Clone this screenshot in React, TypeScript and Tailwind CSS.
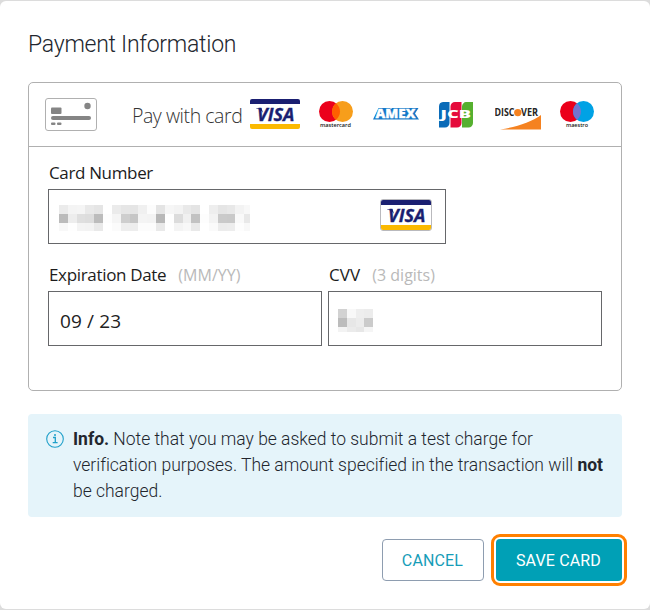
import React from "react";

const cardCols = [0, 9, 18, 26, 35, 44, 53, 62, 71, 79, 88, 97, 106, 115, 124, 132, 141, 150, 159, 168, 176, 185, 191];
const cardRows = [
  ["#ebebeb", "#f4f4f4", "#f5f5f5", "#e9e9e9", "#e5e5e5", "#fff", "#ebebeb", "#e6e6e6", "#e5e5e5", "#f0f0f0", "#fcfcfc", "#e4e4e4", "#f6f6f6", "#f3f3f3", "#e9e9e9", "#e4e4e4", "#fff", "#eeeeee", "#e5e5e5", "#e8e8e8", "#f3f3f3", "#f8f8f8"],
  ["#bbbbbb", "#ededed", "#dfdfdf", "#dddddd", "#bcbcbc", "#fdfdfd", "#f5f5f5", "#cecece", "#c6c6c6", "#f4f4f4", "#f3f3f3", "#b8b8b8", "#fefefe", "#dcdcdc", "#f0f0f0", "#c2c2c2", "#fdfdfd", "#f3f3f3", "#cacaca", "#c9c9c9", "#f9f9f9", "#e8e8e8"],
  ["#f8f8f8", "#fefefe", "#f4f4f4", "#f3f3f3", "#e9e9e9", "#fff", "#fbfbfb", "#eeeeee", "#ededed", "#fcfcfc", "#fcfcfc", "#e9e9e9", "#fff", "#f4f4f4", "#f8f8f8", "#e9e9e9", "#fff", "#fafafa", "#ececec", "#ededed", "#fdfdfd", "#f8f8f8"],
];
const cvvCols = [0, 9, 18, 26, 35];
const cvvRows = [
  ["#d2d2d2", "#f8f8f8", "#eeeeee", "#ececec"],
  ["#bcbcbc", "#e7e7e7", "#ececec", "#cbcbcb"],
  ["#f3f3f3", "#ebebeb", "#e7e7e7", "#f5f5f5"],
];

function Mosaic({ cols, rows, ys }: { cols: number[]; rows: string[][]; ys: number[] }) {
  const w = cols[cols.length - 1];
  const h = ys[ys.length - 1];
  return (
    <svg width={w} height={h} shapeRendering="crispEdges" className="block">
      {rows.map((row, r) =>
        row.map((c, i) => (
          <rect key={r + "-" + i} x={cols[i]} y={ys[r]} width={cols[i + 1] - cols[i]} height={ys[r + 1] - ys[r]} fill={c} />
        )),
      )}
    </svg>
  );
}

function Visa({ framed = false }: { framed?: boolean }) {
  return (
    <svg width="52" height="32" viewBox="0 0 52 32" className="block shrink-0">
      <rect x={framed ? 0.5 : 1} y={framed ? 0.5 : 1} width={framed ? 51 : 50} height={framed ? 31 : 30} rx="2.5" fill="#fff" stroke={framed ? "#b9b9bd" : "none"} />
      <path d="M1 6V3a2 2 0 0 1 2-2h46a2 2 0 0 1 2 2v3z" fill="#1a1f71" />
      <path d="M1 26v3a2 2 0 0 0 2 2h46a2 2 0 0 0 2-2v-3z" fill="#fbb900" />
      <text x="8" y="22.600" fontFamily="Open Sans, sans-serif" fontSize="17.500" fontWeight="700" fontStyle="italic" fill="#1a1f71" stroke="#1a1f71" strokeWidth=".3" textLength="37.500" lengthAdjust="spacingAndGlyphs">VISA</text>
      <path d="M7 10.200h5.500l1.500 4.500C12 12.200 10 10.900 7 10.500z" fill="#1a1f71" />
    </svg>
  );
}

function Circles({ left, right, mid, label, labelX, labelW }: { left: string; right: string; mid: string; label: string; labelX: number; labelW: number }) {
  return (
    <svg width="34" height="28" viewBox="0 0 34 28" className="block shrink-0">
      <circle cx="10.500" cy="10.500" r="10.500" fill={left} />
      <circle cx="23.500" cy="10.500" r="10.500" fill={right} />
      <path d="M17 2.250a10.500 10.500 0 0 1 0 16.500a10.500 10.500 0 0 1 0-16.500" fill={mid} />
      <text x={labelX} y="26" fontFamily="Open Sans, sans-serif" fontSize="6" fontWeight="600" fill="#151515" textLength={labelW} lengthAdjust="spacingAndGlyphs">{label}</text>
    </svg>
  );
}

function Amex() {
  return (
    <svg width="47" height="22" viewBox="0 -4 47 22" className="block shrink-0">
      <path d="M5.500 1H17l1 1 1-1h26.500L42 6.500l4 6H0z" fill="#1578c8" />
      <text x="2.500" y="11" fontFamily="Open Sans, sans-serif" fontSize="11.500" fontWeight="800" fill="#fff" stroke="#fff" strokeWidth=".3" textLength="40" lengthAdjust="spacingAndGlyphs">AMEX</text>
    </svg>
  );
}

function Jcb() {
  return (
    <svg width="34" height="26" viewBox="0 0 34 26" className="block shrink-0">
      <path d="M4 0h6.500v21a4.500 4.500 0 0 1-4.500 4.500H0V4.500A4.500 4.500 0 0 1 4 0z" fill="#0b6bb8" />
      <path d="M16 0h6.500v21a4.500 4.500 0 0 1-4.500 4.500h-6.500V4.500A4.500 4.500 0 0 1 16 0z" fill="#e50b3b" />
      <path d="M28 0h6v21a4.500 4.500 0 0 1-4.500 4.500h-6.500V4.500A4.500 4.500 0 0 1 28 0z" fill="#56b02f" />
      <text x="1.500" y="16.300" fontFamily="Open Sans, sans-serif" fontSize="10" fontWeight="800" fill="#fff" textLength="30.500" lengthAdjust="spacingAndGlyphs">JCB</text>
    </svg>
  );
}

function Discover() {
  return (
    <svg width="47" height="28" viewBox="0 -6 47 28" className="block shrink-0">
      <path d="M46 6v14.500H5C22 18 36 13 46 6z" fill="#f58220" />
      <g fontFamily="Open Sans, sans-serif" fontSize="10" fontWeight="700" fill="#252525">
        <text x="-.5" y="7" textLength="20" lengthAdjust="spacingAndGlyphs">DISC</text>
        <text x="26" y="7" textLength="17" lengthAdjust="spacingAndGlyphs">VER</text>
      </g>
      <circle cx="22.800" cy="3.600" r="3.700" fill="#f58220" />
    </svg>
  );
}

export default function App() {
  return (
    <div className="h-[610px] w-[650px] bg-[#dcdcdc] py-px font-['Roboto',sans-serif]">
      <main className="flex h-[608px] flex-col rounded-[6px] bg-white px-7">
        <h1 className="mt-[29px] h-[52px] text-[23px] leading-[30px] font-light tracking-[-0.25px] text-[#22262e]">Payment Information</h1>

        <section className="h-[309px] rounded-[5px] border border-[#b0b0b0] font-['Open_Sans',sans-serif]">
          <header className="flex h-16 items-start border-b border-[#b0b0b0] pl-4">
            <svg width="52" height="33" viewBox="0 0 52 33" className="mt-[15px] shrink-0" fill="#858585">
              <rect x=".5" y=".5" width="51" height="32" rx="2.500" fill="#fff" stroke="#b0b0b0" />
              <rect x="6" y="9.500" width="10.500" height="6.500" rx="1" />
              <rect x="6" y="18" width="40" height="4" rx="2" />
              <circle cx="42.500" cy="8" r="3.200" />
              <rect x="6" y="24.500" width="4.500" height="2.500" rx="1" />
              <rect x="12" y="24.500" width="4.500" height="2.500" rx="1" />
            </svg>
            <span className="mt-[19px] ml-[35px] w-[115px] text-[19.5px] leading-7 font-light tracking-[-0.45px] whitespace-nowrap text-[#333]">Pay with card</span>
            <div className="mt-[15px] ml-[2px]"><Visa /></div>
            <div className="mt-[18px] ml-[18px]"><Circles left="#eb001b" right="#f79e1b" mid="#ff5f00" label="mastercard" labelX={1} labelW={31} /></div>
            <div className="mt-[20px] ml-5"><Amex /></div>
            <div className="mt-[19px] ml-[19px]"><Jcb /></div>
            <div className="mt-[20px] ml-[22px]"><Discover /></div>
            <div className="mt-[18px] ml-[18px]"><Circles left="#eb001b" right="#00a2e5" mid="#7375cf" label="maestro" labelX={6} labelW={22} /></div>
          </header>

          <div className="pl-[19px]">
            <label className="mt-[14px] block h-7 pl-px text-[17px] leading-6 tracking-[-0.35px] text-[#1c1c1c]">Card Number</label>
            <div className="flex h-[55px] w-[398px] items-start justify-between border border-[#66676a] pl-[10px]">
              <div className="mt-[15px]"><Mosaic cols={cardCols} rows={cardRows} ys={[0, 9, 18, 26]} /></div>
              <div className="mt-[9px] mr-[13px]"><Visa framed /></div>
            </div>
            <div className="mt-[19px] flex gap-[6px]">
              <div className="w-[274px]">
                <label className="flex h-7 items-baseline pl-px text-[17px] leading-6 tracking-[-0.33px] text-[#1c1c1c]">
                  Expiration Date<span className="ml-3 text-[16px] tracking-[0.05px] text-[#b9b9b9]">(MM/YY)</span>
                </label>
                <div className="flex h-[55px] items-center border border-[#66676a] pl-[11px] text-[19px] tracking-[0.15px] text-[#222]"><span className="pt-[5px]">09 / 23</span></div>
              </div>
              <div className="w-[274px]">
                <label className="flex h-7 items-baseline pl-px text-[17px] leading-6 tracking-[0.1px] text-[#1c1c1c]">
                  CVV<span className="ml-3 text-[16px] tracking-[0px] text-[#b9b9b9]">(3 digits)</span>
                </label>
                <div className="h-[55px] border border-[#66676a] pt-[17px] pl-[9px]"><Mosaic cols={cvvCols} rows={cvvRows} ys={[0, 9, 18, 23]} /></div>
              </div>
            </div>
          </div>
        </section>

        <aside className="mt-[23px] flex h-[103px] rounded-[4px] bg-[#e5f4fa] pt-3 pl-[18px]">
          <svg width="18" height="18" viewBox="0 0 18 18" className="mt-1 shrink-0" fill="none" stroke="#1e9fc9">
            <circle cx="9" cy="9" r="8.300" strokeWidth="1.100" />
            <path d="M7 7.500h2.300v5M6.700 12.700h4.900" strokeWidth="1.300" />
            <circle cx="9" cy="4.900" r="1" fill="#1e9fc9" stroke="none" />
          </svg>
          <p className="ml-[9px] text-[17.5px] leading-[26px] font-light tracking-[-0.01px] whitespace-nowrap text-[#22262e]">
            <b className="font-bold">Info.</b> Note that you may be asked to submit a test charge for<br />
            verification purposes. The amount specified in the transaction will <b className="font-bold">not</b><br />
            be charged.
          </p>
        </aside>

        <footer className="mt-[22px] flex justify-end gap-3 text-[16px]">
          <button className="h-[42px] w-[102px] rounded-[4px] border border-[#8e9db0] pt-0.5 pr-px tracking-[0.15px] text-[#169db8]">CANCEL</button>
          <button className="h-[42px] w-[126px] rounded-[4px] bg-[#00a0b6] pt-0.5 pr-px tracking-[0.15px] text-white outline-[3px] outline-offset-2 outline-[#ff8000] outline-solid">SAVE CARD</button>
        </footer>
      </main>
    </div>
  );
}
